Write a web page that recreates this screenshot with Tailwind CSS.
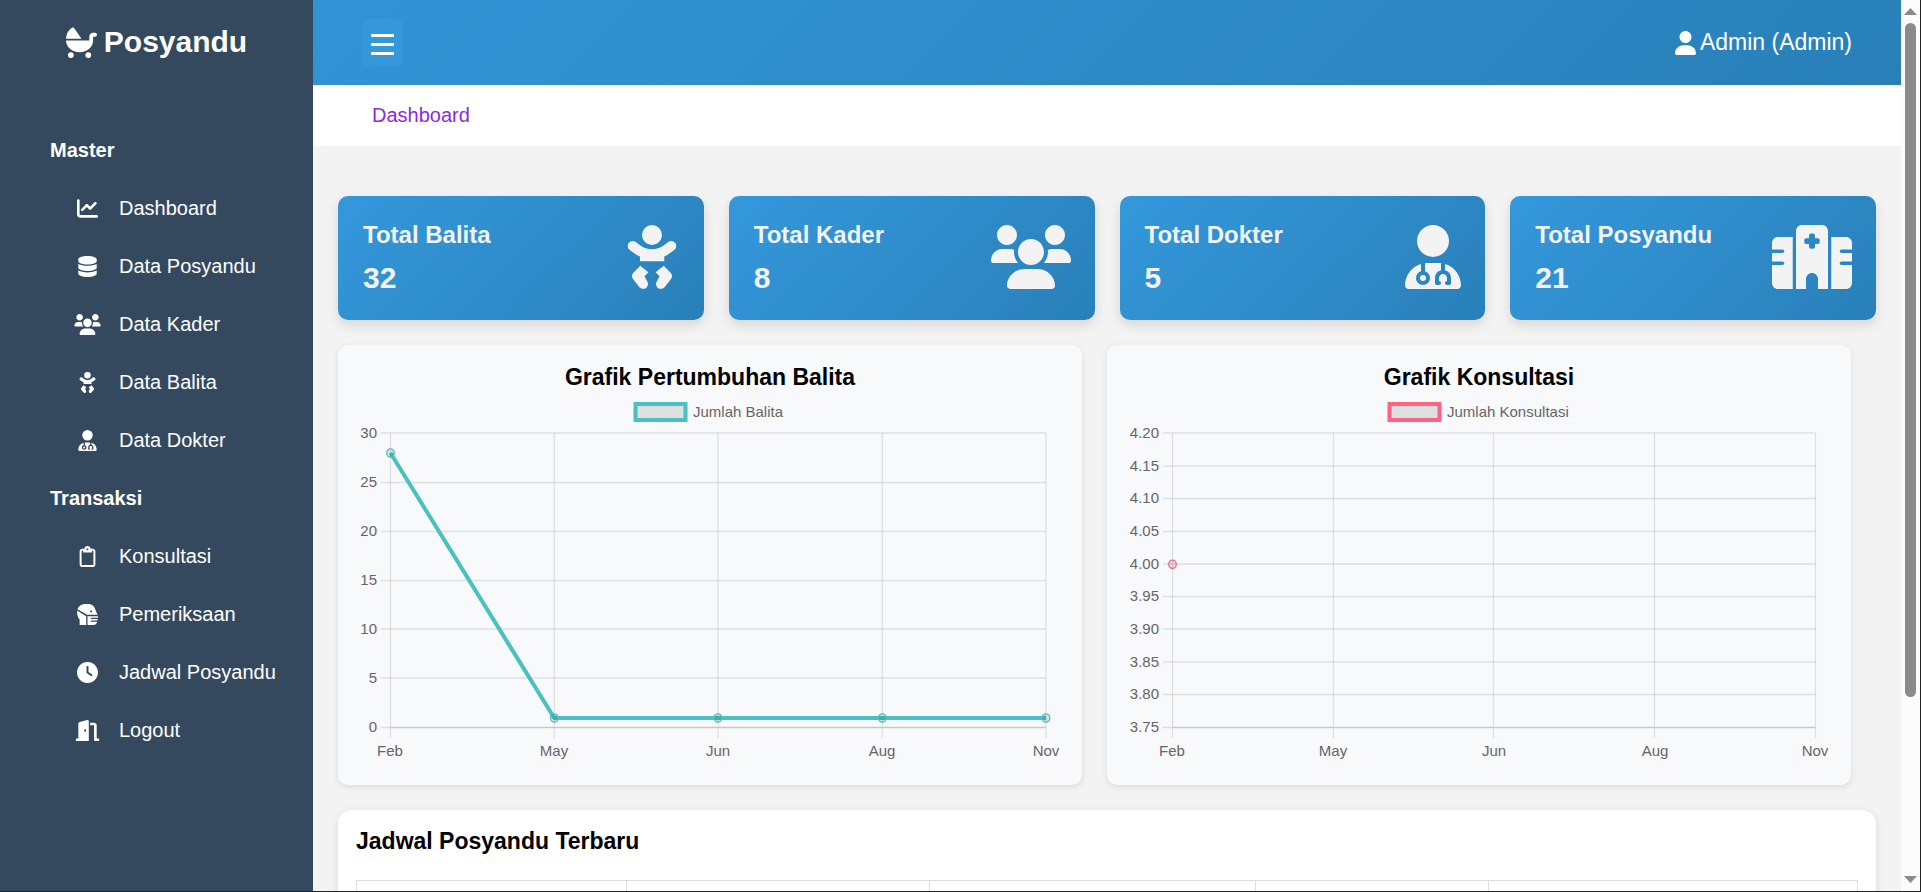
<!DOCTYPE html>
<html lang="id">
<head>
<meta charset="utf-8">
<title>Posyandu - Dashboard</title>
<meta name="viewport" content="width=device-width, initial-scale=1">
<script src="https://cdn.jsdelivr.net/npm/@tailwindcss/browser@4"></script>
</head>
<body class="flex h-screen flex-col overflow-hidden border-r border-b border-[#222222] bg-[#f3f3f3] font-['Liberation_Sans',Arial,sans-serif] text-xl text-black">

<!-- Icon library -->
<svg class="hidden" aria-hidden="true">
  <symbol id="i-carriage" viewBox="0 0 512 512"><path d="M256 192H.1C2.7 117.9 41.3 53 99 14.1c13.200-8.900 30.800-4.300 39.900 8.800L256 192zM384 160c0-35.300 28.700-64 64-64h32c17.700 0 32 14.300 32 32s-14.300 32-32 32h-32v64c0 25.200-5.800 50.200-17.100 73.500-11.200 23.300-27.700 44.400-48.500 62.300-20.800 17.800-45.500 32-72.700 41.600C282.500 411 253.400 416 224 416s-58.500-5-85.700-14.600c-27.200-9.600-51.900-23.800-72.700-41.600-20.800-17.900-37.300-39-48.600-62.300C5.800 274.200 0 249.200 0 224h384v-64zM32 464a48 48 0 1 1 96 0 48 48 0 1 1-96 0zM320 464a48 48 0 1 1 96 0 48 48 0 1 1-96 0z"/></symbol>
  <symbol id="i-chart" viewBox="0 0 512 512"><path d="M64 400C64 408.8 71.16 416 80 416H480C497.7 416 512 430.3 512 448C512 465.7 497.7 480 480 480H80C35.82 480 0 444.2 0 400V64C0 46.33 14.33 32 32 32C49.67 32 64 46.33 64 64V400zM342.6 278.6C330.1 291.1 309.9 291.1 297.4 278.6L240 221.3L150.6 310.6C138.1 323.1 117.9 323.1 105.4 310.6C92.88 298.1 92.88 277.9 105.4 265.4L217.4 153.4C229.9 140.9 250.1 140.9 262.6 153.4L320 210.7L425.4 105.4C437.9 92.88 458.1 92.88 470.6 105.4C483.1 117.9 483.1 138.1 470.6 150.6L342.6 278.6z"/></symbol>
  <symbol id="i-database" viewBox="0 0 448 512"><path d="M448 80V128C448 172.2 347.7 208 224 208C100.3 208 0 172.2 0 128V80C0 35.82 100.3 0 224 0C347.7 0 448 35.82 448 80zM393.2 214.7C413.1 207.3 433.1 197.8 448 186.1V288C448 332.2 347.7 368 224 368C100.3 368 0 332.2 0 288V186.1C14.93 197.8 34.02 207.3 54.85 214.7C99.66 230.7 159.5 240 224 240C288.5 240 348.3 230.7 393.2 214.7zM54.85 374.7C99.66 390.7 159.5 400 224 400C288.5 400 348.3 390.7 393.2 374.7C413.1 367.3 433.1 357.8 448 346.1V432C448 476.2 347.7 512 224 512C100.3 512 0 476.2 0 432V346.1C14.93 357.8 34.02 367.3 54.85 374.7z"/></symbol>
  <symbol id="i-users" viewBox="0 0 640 512"><path d="M319.9 320c57.41 0 104-46.56 104-104c0-57.44-46.540-104-104-104c-57.410 0-104 46.560-104 104C215.9 273.4 262.5 320 319.9 320zM369.900 352H270.100C191.600 352 128 411.700 128 485.300C128 500.100 140.700 512 156.400 512h327.200C499.300 512 512 500.100 512 485.300C512 411.700 448.400 352 369.900 352zM512 160c44.180 0 80-35.820 80-80S556.200 0 512 0c-44.180 0-80 35.820-80 80S467.800 160 512 160zM183.900 216c0-5.449 .982-10.630 1.609-15.910C174.600 194.100 162.600 192 149.900 192H88.080C39.440 192 0 233.800 0 285.300C0 295.800 7.887 304 17.620 304h199.500C196.700 280.200 183.900 249.700 183.900 216zM128 160c44.180 0 80-35.820 80-80S172.200 0 128 0C83.820 0 48 35.820 48 80S83.820 160 128 160zM551.900 192h-61.840c-12.800 0-24.880 3.037-35.860 8.240C454.800 205.500 455.800 210.600 455.800 216c0 33.710-12.780 64.210-33.160 88h199.700C632.100 304 640 295.800 640 285.300C640 233.800 600.600 192 551.900 192z"/></symbol>
  <symbol id="i-baby" viewBox="0 0 448 512"><path d="M144 80a80 80 0 1 1 160 0a80 80 0 1 1-160 0zM37.700 144.500c13-17.900 38-21.800 55.900-8.800L131.800 163c26.800 19.500 59.100 31 92.200 31s65.400-11.500 92.200-31l38.200-27.400c17.900-13 42.900-9 55.900 8.800s9 42.900-8.800 55.900l-38.200 27.400c-13.600 9.900-26.100 18.200-41.300 25V290H128V252.700c-15.200-6.700-29.700-15.100-43.300-25L46.500 200.300c-17.900-13-21.800-38-8.800-55.900zM130 325L195 377L164 409L184 447C197 466 194 490 177 503C160 516 135 512 122 496L72 431C61 417 61 397 73 383ZM318 325L253 377L284 409L264 447C251 466 254 490 271 503C288 516 313 512 326 496L376 431C387 417 387 397 375 383Z"/></symbol>
  <symbol id="i-doctor" viewBox="0 0 448 512"><path d="M224 256A128 128 0 1 0 224 0a128 128 0 1 0 0 256zm-96 55.200C54 332.900 0 401.300 0 482.300C0 498.700 13.300 512 29.700 512H418.300c16.400 0 29.700-13.300 29.700-29.700c0-81-54-149.400-128-171.100V362c27.600 7.100 48 32.200 48 62v40c0 8.800-7.200 16-16 16H336c-8.800 0-16-7.200-16-16s7.200-16 16-16V424c0-17.700-14.300-32-32-32s-32 14.300-32 32v24c8.800 0 16 7.200 16 16s-7.200 16-16 16H256c-8.800 0-16-7.200-16-16V424c0-29.800 20.400-54.900 48-62V304.900c-6-.6-12.100-.9-18.300-.9H178.300c-6.200 0-12.300 .3-18.300 .9v65.400c23.100 6.900 40 28.300 40 53.700c0 30.900-25.100 56-56 56s-56-25.100-56-56c0-25.400 16.900-46.800 40-53.700V311.200zM144 448a24 24 0 1 0 0-48 24 24 0 1 0 0 48z"/></symbol>
  <symbol id="i-hospital" viewBox="0 0 640 512"><path d="M192 48c0-26.500 21.500-48 48-48H400c26.500 0 48 21.500 48 48V512H368V432c0-26.500-21.500-48-48-48s-48 21.500-48 48v80H192V48zM48 96H166V512H48c-26.500 0-48-21.500-48-48V320H84c8 0 14-6 14-14s-6-14-14-14H0V224H84c8 0 14-6 14-14s-6-14-14-14H0V144c0-26.500 21.500-48 48-48zm544 0c26.500 0 48 21.500 48 48v52H556c-8 0-14 6-14 14s6 14 14 14h84v68H556c-8 0-14 6-14 14s6 14 14 14h84V464c0 26.500-21.500 48-48 48H474V96H592zM312 68c-8.800 0-16 7.200-16 16v22H274c-8.800 0-16 7.200-16 16v14c0 8.800 7.200 16 16 16h22v22c0 8.800 7.200 16 16 16h16c8.800 0 16-7.200 16-16V152h22c8.800 0 16-7.200 16-16V122c0-8.800-7.200-16-16-16H344V84c0-8.800-7.200-16-16-16H312z"/></symbol>
  <symbol id="i-clipboard" viewBox="0 0 384 512"><path d="M280 64h40c35.300 0 64 28.700 64 64V448c0 35.300-28.700 64-64 64H64c-35.300 0-64-28.700-64-64V128C0 92.700 28.700 64 64 64h49.600C121 27.500 153.300 0 192 0s71 27.500 78.400 64H280zM64 112c-8.800 0-16 7.200-16 16V448c0 8.800 7.200 16 16 16H320c8.800 0 16-7.200 16-16V128c0-8.800-7.200-16-16-16H304v24c0 13.300-10.700 24-24 24H104c-13.300 0-24-10.700-24-24V112H64zm128-8a24 24 0 1 0 0-48 24 24 0 1 0 0 48z"/></symbol>
  <symbol id="i-mask" viewBox="0 0 512 512"><path fill-rule="evenodd" d="M12 130C38 52 112 0 200 0h70c92 0 158 58 180 142l32 84c5 13 12 20 30 38H246L12 130zM344 160a24 24 0 1 0 0 48 24 24 0 1 0 0-48zM2 160l222 140v212H64V378C24 342-4 260 2 160zM256 296H512v40H344c-10 0-10 28 0 28h162l-10 40H344c-10 0-10 28 0 28h146c-8 48-40 80-90 80H256V296z"/></symbol>
  <symbol id="i-clock" viewBox="0 0 512 512"><path d="M256 512C114.600 512 0 397.400 0 256C0 114.600 114.600 0 256 0C397.400 0 512 114.600 512 256C512 397.400 397.400 512 256 512zM232 256C232 264 236 271.500 242.700 275.900L338.700 339.900C349.700 347.300 364.600 344.300 371.900 333.300C379.300 322.300 376.300 307.400 365.300 300L280 243.200V120C280 106.700 269.300 96 256 96C242.700 96 232 106.700 232 120L232 256z"/></symbol>
  <symbol id="i-door" viewBox="0 0 576 512"><path d="M320 32c0-9.900-4.500-19.200-12.300-25.200S289.800-1.400 280.200 1l-179.900 45C79 51.300 64 70.500 64 92.500V448H32c-17.700 0-32 14.300-32 32s14.300 32 32 32H320V32zM256 256c0 17.700-10.700 32-24 32s-24-14.300-24-32s10.700-32 24-32s24 14.300 24 32zm96-128h96V480c0 17.700 14.300 32 32 32h64c17.700 0 32-14.300 32-32s-14.300-32-32-32H512V128c0-35.300-28.700-64-64-64H352v64z"/></symbol>
  <symbol id="i-user" viewBox="0 0 448 512"><path d="M224 256c70.700 0 128-57.310 128-128s-57.300-128-128-128C153.300 0 96 57.310 96 128S153.300 256 224 256zM274.700 304H173.300C77.610 304 0 381.600 0 477.300c0 19.140 15.520 34.670 34.660 34.670h378.700C432.500 512 448 496.500 448 477.300C448 381.600 370.400 304 274.700 304z"/></symbol>
</svg>

<div class="flex min-h-0 grow">
  <!-- Sidebar -->
  <aside class="w-[313px] shrink-0 bg-[#34495e] pt-6 text-white">
    <a href="#" class="flex items-center justify-center gap-[7px] text-3xl/9 font-bold"><svg class="size-[31px] fill-current"><use href="#i-carriage"/></svg>Posyandu</a>
    <nav class="mt-[61px] leading-[58px]">
      <h2 class="pl-[50px] font-bold">Master</h2>
      <ul>
        <li><a href="#" class="flex items-center gap-4 pl-[72px]"><svg class="h-[21px] w-[31px] fill-current"><use href="#i-chart"/></svg>Dashboard</a></li>
        <li><a href="#" class="flex items-center gap-4 pl-[72px]"><svg class="h-[21px] w-[31px] fill-current"><use href="#i-database"/></svg>Data Posyandu</a></li>
        <li><a href="#" class="flex items-center gap-4 pl-[72px]"><svg class="h-[21px] w-[31px] fill-current"><use href="#i-users"/></svg>Data Kader</a></li>
        <li><a href="#" class="flex items-center gap-4 pl-[72px]"><svg class="h-[21px] w-[31px] fill-current"><use href="#i-baby"/></svg>Data Balita</a></li>
        <li><a href="#" class="flex items-center gap-4 pl-[72px]"><svg class="h-[21px] w-[31px] fill-current"><use href="#i-doctor"/></svg>Data Dokter</a></li>
      </ul>
      <h2 class="pl-[50px] font-bold">Transaksi</h2>
      <ul>
        <li><a href="#" class="flex items-center gap-4 pl-[72px]"><svg class="h-[21px] w-[31px] fill-current"><use href="#i-clipboard"/></svg>Konsultasi</a></li>
        <li><a href="#" class="flex items-center gap-4 pl-[72px]"><svg class="h-[21px] w-[31px] fill-current"><use href="#i-mask"/></svg>Pemeriksaan</a></li>
        <li><a href="#" class="flex items-center gap-4 pl-[72px]"><svg class="h-[21px] w-[31px] fill-current"><use href="#i-clock"/></svg>Jadwal Posyandu</a></li>
        <li><a href="#" class="flex items-center gap-4 pl-[72px]"><svg class="h-[21px] w-[31px] fill-current"><use href="#i-door"/></svg>Logout</a></li>
      </ul>
    </nav>
  </aside>

  <div class="min-w-0 grow overflow-hidden">
    <header class="flex h-[85px] items-center justify-between bg-[linear-gradient(135deg,#3498db_-18%,#2980b9_100%)] px-[49px] text-white">
      <button type="button" aria-label="Menu" class="flex h-[47px] w-[41px] items-center justify-center rounded-md bg-[#3498db] pt-1">
        <svg class="h-[21px] w-[23px] fill-current" viewBox="0 0 23 21"><path d="M0 0h23v3H0zM0 9h23v3H0zM0 18h23v3H0z"/></svg>
      </button>
      <a href="#" class="flex items-center gap-1 text-[23px]"><svg class="h-6 w-[21px] fill-current"><use href="#i-user"/></svg>Admin (Admin)</a>
    </header>
    <nav class="flex h-[61px] items-center bg-white px-[59px] pb-0.5"><a href="#" class="text-[#8a2be2]">Dashboard</a></nav>

    <main class="px-[25px] pt-[50px]">
      <section class="grid grid-cols-4 gap-[25px] text-[#f3f3f3]">
        <div class="flex items-center justify-between rounded-[10px] bg-linear-[135deg,#3498db,#2980b9] py-[25px] pr-6 pl-[25px] shadow-[0_5px_12px_rgba(0,0,0,0.12)]">
          <div><h3 class="text-2xl/[27px] font-bold">Total Balita</h3><p class="mt-3 text-3xl/[35px] font-bold">32</p></div>
          <svg class="mb-[3px] h-16 w-14 fill-current"><use href="#i-baby"/></svg>
        </div>
        <div class="flex items-center justify-between rounded-[10px] bg-linear-[135deg,#3498db,#2980b9] py-[25px] pr-6 pl-[25px] shadow-[0_5px_12px_rgba(0,0,0,0.12)]">
          <div><h3 class="text-2xl/[27px] font-bold">Total Kader</h3><p class="mt-3 text-3xl/[35px] font-bold">8</p></div>
          <svg class="mb-[3px] h-16 w-20 fill-current"><use href="#i-users"/></svg>
        </div>
        <div class="flex items-center justify-between rounded-[10px] bg-linear-[135deg,#3498db,#2980b9] py-[25px] pr-6 pl-[25px] shadow-[0_5px_12px_rgba(0,0,0,0.12)]">
          <div><h3 class="text-2xl/[27px] font-bold">Total Dokter</h3><p class="mt-3 text-3xl/[35px] font-bold">5</p></div>
          <svg class="mb-[3px] h-16 w-14 fill-current"><use href="#i-doctor"/></svg>
        </div>
        <div class="flex items-center justify-between rounded-[10px] bg-linear-[135deg,#3498db,#2980b9] py-[25px] pr-6 pl-[25px] shadow-[0_5px_12px_rgba(0,0,0,0.12)]">
          <div><h3 class="text-2xl/[27px] font-bold">Total Posyandu</h3><p class="mt-3 text-3xl/[35px] font-bold">21</p></div>
          <svg class="mb-[3px] h-16 w-20 fill-current"><use href="#i-hospital"/></svg>
        </div>
      </section>

      <section class="mt-[25px] grid grid-cols-2 gap-[25px] pr-[25px]">
        <div class="rounded-[10px] bg-[#f8f9fb] p-[18px] shadow-[0_2px_6px_rgba(0,0,0,0.1)]">
          <h3 class="text-center text-[23px]/[28px] font-bold">Grafik Pertumbuhan Balita</h3>
          <svg class="block w-full text-[15px]" viewBox="0 0 708 376" role="img" aria-label="Grafik Pertumbuhan Balita">
            <g fill="none" stroke="#000" stroke-opacity="0.1" stroke-width="1.3">
              <path d="M24.500 42H690M24.500 91.500H690M24.500 140.500H690M24.500 189.500H690M24.500 238H690M24.500 287H690M24.500 336.500H690"/>
              <path d="M34.500 42V347M198.300 42V347M362 42V347M526.300 42V347M690 42V347M34.500 42V336M34.500 336.500H690"/>
            </g>
            <path d="M34.500 62L198.300 327H690" fill="none" stroke="#4bc0c0" stroke-width="4" stroke-linejoin="round"/>
            <g fill="#000" fill-opacity="0.1" stroke="#4bc0c0" stroke-width="1.3">
              <ellipse cx="34.500" cy="62" rx="3.800" ry="4.200"/><ellipse cx="198.300" cy="327" rx="3.800" ry="4.200"/><ellipse cx="362" cy="327" rx="3.800" ry="4.200"/><ellipse cx="526.300" cy="327" rx="3.800" ry="4.200"/><ellipse cx="690" cy="327" rx="3.800" ry="4.200"/>
            </g>
            <rect x="279.500" y="13" width="50" height="16" fill="#000" fill-opacity="0.1" stroke="#4bc0c0" stroke-width="4"/>
            <g fill="#666">
              <text x="337" y="26">Jumlah Balita</text>
              <g text-anchor="end"><text x="21" y="47">30</text><text x="21" y="96">25</text><text x="21" y="145">20</text><text x="21" y="194">15</text><text x="21" y="243">10</text><text x="21" y="292">5</text><text x="21" y="341">0</text></g>
              <g text-anchor="middle"><text x="34" y="365">Feb</text><text x="198" y="365">May</text><text x="362" y="365">Jun</text><text x="526" y="365">Aug</text><text x="690" y="365">Nov</text></g>
            </g>
          </svg>
        </div>
        <div class="rounded-[10px] bg-[#f8f9fb] p-[18px] shadow-[0_2px_6px_rgba(0,0,0,0.1)]">
          <h3 class="text-center text-[23px]/[28px] font-bold">Grafik Konsultasi</h3>
          <svg class="block w-full text-[15px]" viewBox="0 0 708 376" role="img" aria-label="Grafik Konsultasi">
            <g fill="none" stroke="#000" stroke-opacity="0.1" stroke-width="1.3">
              <path d="M38 42H690.500M38 75H690.500M38 107.500H690.500M38 140.500H690.500M38 173H690.500M38 205.500H690.500M38 238H690.500M38 271H690.500M38 303.500H690.500M38 336.500H690.500"/>
              <path d="M47.500 42V347M208.500 42V347M368.500 42V347M529.500 42V347M690.500 42V347M47.500 42V336M47.500 336.500H690.500"/>
            </g>
            <ellipse cx="47.500" cy="173.300" rx="3.800" ry="4.200" fill="#000" fill-opacity="0.1" stroke="#ff6384" stroke-width="1.3"/>
            <rect x="264.500" y="13" width="50" height="16" fill="#000" fill-opacity="0.1" stroke="#ff6384" stroke-width="4"/>
            <g fill="#666">
              <text x="322" y="26">Jumlah Konsultasi</text>
              <g text-anchor="end"><text x="34" y="47">4.20</text><text x="34" y="80">4.15</text><text x="34" y="112">4.10</text><text x="34" y="145">4.05</text><text x="34" y="178">4.00</text><text x="34" y="210">3.95</text><text x="34" y="243">3.90</text><text x="34" y="276">3.85</text><text x="34" y="308">3.80</text><text x="34" y="341">3.75</text></g>
              <g text-anchor="middle"><text x="47" y="365">Feb</text><text x="208" y="365">May</text><text x="369" y="365">Jun</text><text x="530" y="365">Aug</text><text x="690" y="365">Nov</text></g>
            </g>
          </svg>
        </div>
      </section>

      <section class="mt-[25px] rounded-[14px] bg-white px-[18px] pt-[17px] pb-5 shadow-[0_2px_8px_rgba(0,0,0,0.1)]">
        <h3 class="text-[23px]/[28px] font-bold">Jadwal Posyandu Terbaru</h3>
        <table class="mt-[25px] w-full table-fixed border-collapse" aria-label="Jadwal Posyandu Terbaru">
          <tr class="h-14">
            <th class="w-[18%] border border-[#dddddd]"></th>
            <th class="w-[20.2%] border border-[#dddddd]"></th>
            <th class="w-[21.7%] border border-[#dddddd]"></th>
            <th class="w-[15.5%] border border-[#dddddd]"></th>
            <th class="border border-[#dddddd]"></th>
          </tr>
        </table>
      </section>
    </main>
  </div>

  <!-- Scroll track -->
  <div class="flex w-[19px] shrink-0 flex-col items-center bg-[#fcfcfc] py-2" aria-hidden="true">
    <svg class="h-[7px] w-[13px] fill-[#8b8b8b]" viewBox="0 0 13 7"><path d="M6.500 0L13 7H0z"/></svg>
    <div class="mt-2 flex w-[11px] grow flex-col"><div class="h-[79%] rounded-full bg-[#8b8b8b]"></div></div>
    <svg class="h-[7px] w-[13px] fill-[#8b8b8b]" viewBox="0 0 13 7"><path d="M0 0H13L6.500 7z"/></svg>
  </div>
</div>
</body>
</html>
